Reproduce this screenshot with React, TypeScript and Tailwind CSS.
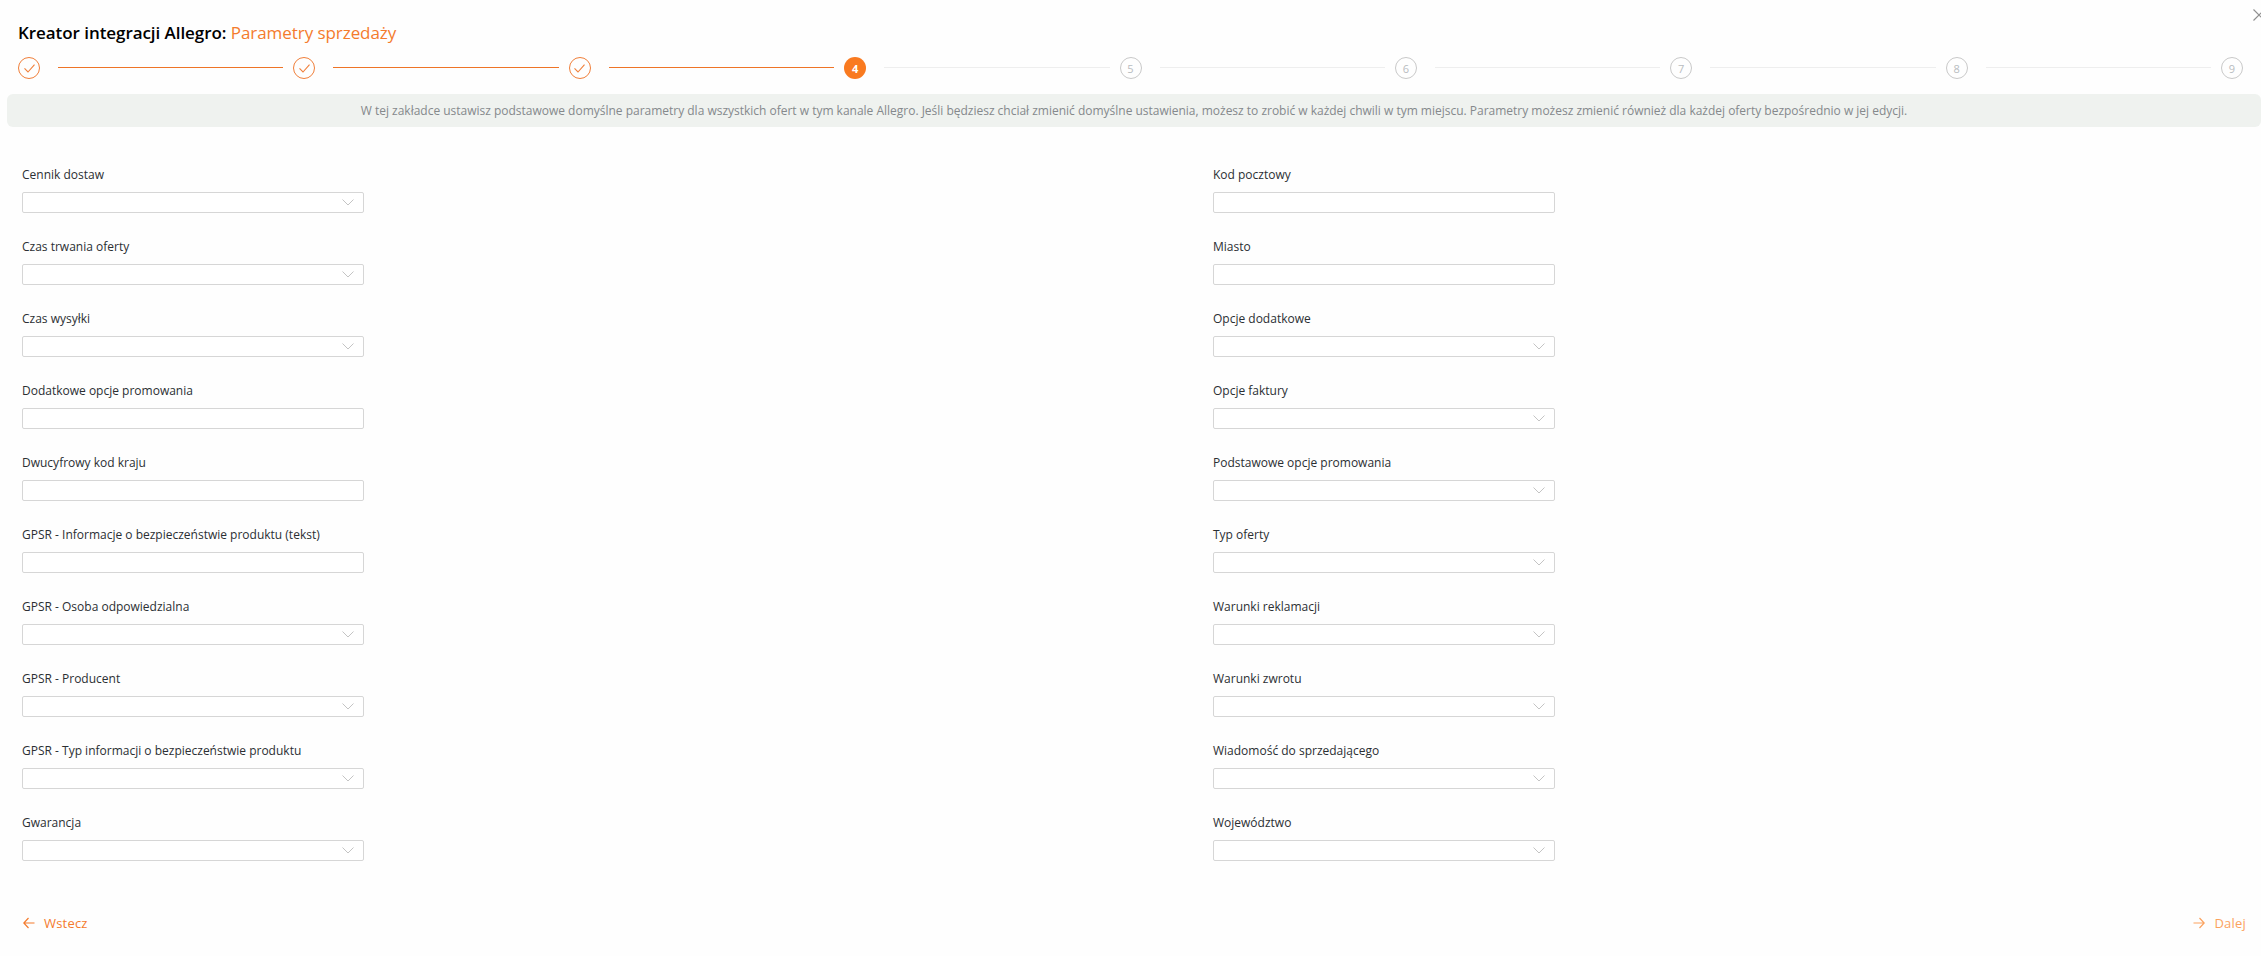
import React from "react";

const font = { fontFamily: '"Open Sans", "Liberation Sans", sans-serif' };

type F = { label: string; select?: boolean };

const left: F[] = [
  { label: "Cennik dostaw", select: true },
  { label: "Czas trwania oferty", select: true },
  { label: "Czas wysyłki", select: true },
  { label: "Dodatkowe opcje promowania" },
  { label: "Dwucyfrowy kod kraju" },
  { label: "GPSR - Informacje o bezpieczeństwie produktu (tekst)" },
  { label: "GPSR - Osoba odpowiedzialna", select: true },
  { label: "GPSR - Producent", select: true },
  { label: "GPSR - Typ informacji o bezpieczeństwie produktu", select: true },
  { label: "Gwarancja", select: true },
];

const right: F[] = [
  { label: "Kod pocztowy" },
  { label: "Miasto" },
  { label: "Opcje dodatkowe", select: true },
  { label: "Opcje faktury", select: true },
  { label: "Podstawowe opcje promowania", select: true },
  { label: "Typ oferty", select: true },
  { label: "Warunki reklamacji", select: true },
  { label: "Warunki zwrotu", select: true },
  { label: "Wiadomość do sprzedającego", select: true },
  { label: "Województwo", select: true },
];

function Field({ label, select }: F) {
  return (
    <div className="h-[72px] flex flex-col">
      <div className="h-[20px] mt-[3px] mb-[7px] text-[12px] leading-[20px] text-[#2b2f33] whitespace-nowrap">{label}</div>
      <div className="w-[342px] h-[21px] border border-[#d6d6d6] rounded-[2px] bg-white flex items-center justify-end pr-[9px]">
        {select && (
          <svg width="12" height="7" viewBox="0 0 12 7" fill="none" stroke="#c4c4c4" strokeWidth="1">
            <path d="M0.5 0.5 L6 6 L11.5 0.5" />
          </svg>
        )}
      </div>
    </div>
  );
}

function Step({ n }: { n: number }) {
  const cls = "w-[22px] h-[22px] shrink-0 rounded-full flex items-center justify-center leading-none";
  if (n < 4)
    return (
      <div className={cls + " border border-[#f07f3a]"}>
        <svg width="11" height="9" viewBox="0 0 11 9" fill="none" stroke="#f07f3a" strokeWidth="1.1">
          <path d="M0.5 4.3 L4 8 L10.5 0.7" />
        </svg>
      </div>
    );
  if (n === 4) return <div className={cls + " bg-[#f97a20] text-white font-bold text-[11px]"}>4</div>;
  return <div className={cls + " border border-[#c9c9c9] text-[#b8bcc0] text-[11px]"}>{n}</div>;
}

export default function App() {
  const steps = [1, 2, 3, 4, 5, 6, 7, 8];
  return (
    <div style={font} className="relative w-[2261px] h-[956px] overflow-hidden bg-[#fefefe] flex flex-col">
      <svg className="absolute left-[2253px] top-[9px]" width="12" height="12" viewBox="0 0 12 12" fill="none" stroke="#8f8f8f" strokeWidth="1.2">
        <path d="M0.5 0.5 L11.5 11.5 M11.5 0.5 L0.5 11.5" />
      </svg>
      <div className="pl-[18px] pt-[22px] h-[57px] text-[17px] leading-[22px] whitespace-nowrap tracking-[-0.06px]">
        <span className="font-semibold text-black">Kreator integracji Allegro: </span>
        <span className="text-[#f47b2d]">Parametry sprzedaży</span>
      </div>
      <div className="flex items-start pl-[18px] pr-[18px] h-[22px]">
        {steps.map((n) => (
          <React.Fragment key={n}>
            <Step n={n} />
            <div className={"flex-1 ml-[18px] mr-[10px] mt-[10px] h-[1px] " + (n < 4 ? "bg-[#ee7427]" : "bg-[#eeeeee]")} />
          </React.Fragment>
        ))}
        <Step n={9} />
      </div>
      <div className="ml-[7px] mt-[15px] h-[33px] shrink-0 rounded-[6px] bg-[#eff2ef] flex items-center justify-center text-[12px] text-[#85898c] tracking-[-0.01px] whitespace-nowrap">
        W tej zakładce ustawisz podstawowe domyślne parametry dla wszystkich ofert w tym kanale Allegro. Jeśli będziesz chciał zmienić domyślne ustawienia, możesz to zrobić w każdej chwili w tym miejscu. Parametry możesz zmienić również dla każdej oferty bezpośrednio w jej edycji.
      </div>
      <div className="grid grid-cols-[1191px_1fr] pl-[22px] pt-[35px]">
        <div>{left.map((f) => <Field key={f.label} {...f} />)}</div>
        <div>{right.map((f) => <Field key={f.label} {...f} />)}</div>
      </div>
      <div className="flex justify-between pl-[23px] pr-[15px] mt-[31px] text-[13px] leading-[20px] tracking-[0.2px]">
        <div className="flex items-center gap-[9px] text-[#f47b2d]">
          <svg width="12" height="12" viewBox="0 0 12 12" fill="none" stroke="currentColor" strokeWidth="1.2">
            <path d="M11.5 6 H0.8 M5.5 1 L0.8 6 L5.5 11" />
          </svg>
          Wstecz
        </div>
        <div className="flex items-center gap-[9px] text-[#fba25e]">
          <svg width="12" height="12" viewBox="0 0 12 12" fill="none" stroke="currentColor" strokeWidth="1.2">
            <path d="M0.5 6 H11.2 M6.5 1 L11.2 6 L6.5 11" />
          </svg>
          Dalej
        </div>
      </div>
    </div>
  );
}
